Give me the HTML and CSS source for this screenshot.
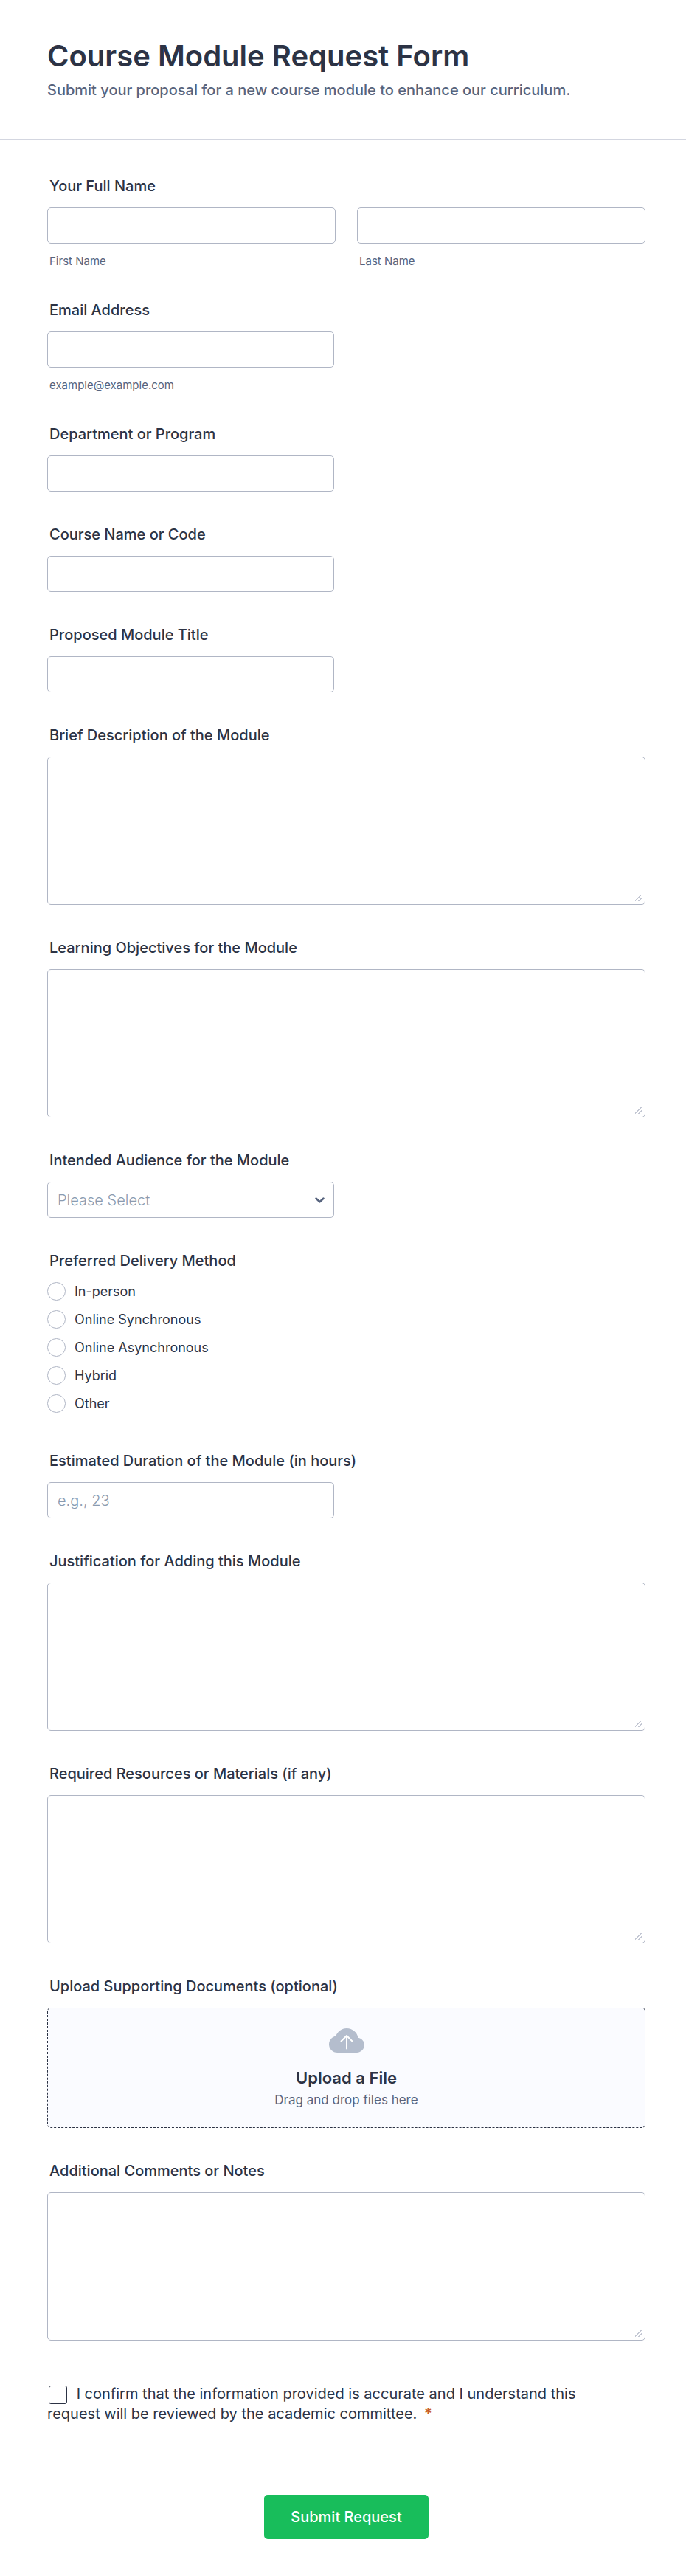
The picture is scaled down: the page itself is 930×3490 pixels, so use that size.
FILE: index.html
```html
<!DOCTYPE html>
<html lang="en">
<head>
    <meta charset="UTF-8">
    <meta name="viewport" content="width=device-width, initial-scale=1.0">
    <title>Course Module Request Form</title>
    <link rel="stylesheet" href="styles.css">
</head>
<body>

<form class="form">
    <header class="form-header">
        <h1>Course Module Request Form</h1>
        <p>Submit your proposal for a new course module to enhance our curriculum.</p>
    </header>

    <div class="form-body">
        <fieldset class="field">
            <legend class="label">Your Full Name</legend>
            <div class="name-row">
                <div class="name-col">
                    <input class="input" type="text" id="first">
                    <label class="sublabel" for="first">First Name</label>
                </div>
                <div class="name-col">
                    <input class="input" type="text" id="last">
                    <label class="sublabel" for="last">Last Name</label>
                </div>
            </div>
        </fieldset>

        <div class="field">
            <label class="label" for="email">Email Address</label>
            <input class="input half" type="email" id="email" aria-describedby="email-hint">
            <span class="sublabel" id="email-hint">example@example.com</span>
        </div>

        <div class="field">
            <label class="label" for="department">Department or Program</label>
            <input class="input half" type="text" id="department">
        </div>

        <div class="field">
            <label class="label" for="course">Course Name or Code</label>
            <input class="input half" type="text" id="course">
        </div>

        <div class="field">
            <label class="label" for="module-title">Proposed Module Title</label>
            <input class="input half" type="text" id="module-title">
        </div>

        <div class="field">
            <label class="label" for="description">Brief Description of the Module</label>
            <textarea class="input textarea" id="description"></textarea>
        </div>

        <div class="field">
            <label class="label" for="objectives">Learning Objectives for the Module</label>
            <textarea class="input textarea" id="objectives"></textarea>
        </div>

        <div class="field">
            <label class="label" for="audience">Intended Audience for the Module</label>
            <div class="select-wrap half">
                <select class="input select" id="audience">
                    <option>Please Select</option>
                </select>
                <svg class="chevron" viewBox="0 0 12 8" aria-hidden="true"><path d="M1.500 1.500 6 5.700l4.500-4.200"/></svg>
            </div>
        </div>

        <fieldset class="field radio-field">
            <legend class="label">Preferred Delivery Method</legend>
            <div class="radio-list">
                <label class="radio"><input type="radio" name="delivery">In-person</label>
                <label class="radio"><input type="radio" name="delivery">Online Synchronous</label>
                <label class="radio"><input type="radio" name="delivery">Online Asynchronous</label>
                <label class="radio"><input type="radio" name="delivery">Hybrid</label>
                <label class="radio"><input type="radio" name="delivery">Other</label>
            </div>
        </fieldset>

        <div class="field">
            <label class="label" for="duration">Estimated Duration of the Module (in hours)</label>
            <input class="input half" type="text" id="duration" placeholder="e.g., 23">
        </div>

        <div class="field">
            <label class="label" for="justification">Justification for Adding this Module</label>
            <textarea class="input textarea" id="justification"></textarea>
        </div>

        <div class="field">
            <label class="label" for="resources">Required Resources or Materials (if any)</label>
            <textarea class="input textarea" id="resources"></textarea>
        </div>

        <div class="field">
            <span class="label" id="upload-label">Upload Supporting Documents (optional)</span>
            <button class="upload" type="button" aria-describedby="upload-label">
                <svg class="cloud" viewBox="0 0 48 33" aria-hidden="true">
                    <path class="cloud-shape" d="M24 0c7.800 0 14.200 5.600 15.600 12.800C44.400 13.700 48 17.700 48 22.600 48 28.300 43.400 33 37.800 33H11.500C5.100 33 0 27.900 0 21.700c0-5.500 4-10.100 9.300-11.200C11.500 4.300 17.300 0 24 0z"/>
                    <path class="cloud-arrow" d="M24 27.500V10M16.500 17.500 24 10l7.500 7.500"/>
                </svg>
                <span class="upload-title">Upload a File</span>
                <span class="upload-hint">Drag and drop files here</span>
            </button>
        </div>

        <div class="field">
            <label class="label" for="comments">Additional Comments or Notes</label>
            <textarea class="input textarea" id="comments"></textarea>
        </div>

        <div class="confirm">
            <input type="checkbox" id="confirm" required>
            <label for="confirm">I confirm that the information provided is accurate and I understand this request will be reviewed by the academic committee. <span class="required">*</span></label>
        </div>
    </div>

    <footer class="form-footer">
        <button class="submit" type="submit">Submit Request</button>
    </footer>
</form>

</body>
</html>
```
FILE: styles.css
```css
* {
    box-sizing: border-box;
}

body {
    margin: 0;
    background-color: #fff;
    color: #2c3345;
    font-family: Inter, "Liberation Sans", sans-serif;
    font-size: 20px;
}

.form-header {
    padding: 52px 64px;
    border-bottom: 1px solid #d3d6e0;
}

.form-header h1 {
    margin: 0 0 8px;
    font-size: 40px;
    font-weight: 600;
    line-height: 48px;
}

.form-header p {
    margin: 0;
    color: #57647e;
    font-weight: 500;
    line-height: 28px;
}

.form-body {
    padding: 51px 55px 58px 64px;
}

.field {
    display: flex;
    flex-direction: column;
    align-items: flex-start;
    min-width: 0;
    margin: 0 0 46px;
    padding: 0;
    border: 0;
}

.label {
    display: block;
    margin-bottom: 17px;
    padding: 0 3px;
    font-weight: 500;
    line-height: 24px;
}

.input {
    display: block;
    width: 100%;
    height: 49px;
    margin: 0;
    padding: 0 13px;
    border: 1px solid #b0b6c5;
    border-radius: 5px;
    background-color: #fff;
    color: #2c3345;
    font: inherit;
    font-weight: 300;
}

.input::placeholder {
    color: #8a9bb0;
    opacity: 1;
}

.half {
    width: 48%;
}

.sublabel {
    display: block;
    margin-top: 16px;
    padding: 0 3px;
    color: #57647e;
    font-size: 15px;
    line-height: 16px;
}

.name-row {
    display: flex;
    gap: 29px;
    width: 100%;
}

.name-col {
    flex: 1;
}

.textarea {
    height: 201px;
    padding: 12px 13px;
    resize: vertical;
}

/* two short diagonal strokes as the resize grip */
.textarea::-webkit-resizer {
    background: linear-gradient(135deg, transparent 44%, #c3c7d3 44% 54%, transparent 54% 68%, #c3c7d3 68% 78%, transparent 78%) 2px 2px / 9px 9px no-repeat;
}

.select-wrap {
    position: relative;
}

.select {
    appearance: none;
    color: #8a9bb0;
}

.chevron {
    position: absolute;
    top: 21px;
    right: 13px;
    width: 13px;
    height: 9px;
    fill: none;
    stroke: #57647e;
    stroke-width: 2.5;
    stroke-linecap: round;
    stroke-linejoin: round;
    pointer-events: none;
}

.radio-field {
    padding-bottom: 7px;
}

.radio-list {
    display: flex;
    flex-direction: column;
    gap: 13px;
}

.radio {
    display: flex;
    align-items: center;
    gap: 12px;
    font-size: 18px;
    line-height: 24px;
}

.radio input {
    appearance: none;
    width: 25px;
    height: 25px;
    margin: 0;
    border: 1px solid #b0b6c5;
    border-radius: 50%;
    background-color: #fff;
}

.radio input:checked {
    border: 7px solid #2e69ff;
}

.upload {
    display: flex;
    flex-direction: column;
    align-items: center;
    width: 100%;
    padding: 27px 16px;
    border: 1px dashed #2c3345;
    border-radius: 5px;
    background-color: #fafbff;
    font: inherit;
    cursor: pointer;
}

.cloud {
    width: 48px;
    height: 33px;
    margin-bottom: 20px;
}

.cloud-shape {
    fill: #b4bdcd;
}

.cloud-arrow {
    fill: none;
    stroke: #fff;
    stroke-width: 2;
    stroke-linecap: round;
    stroke-linejoin: round;
}

.upload-title {
    color: #2c3345;
    font-size: 22px;
    font-weight: 600;
    line-height: 28px;
}

.upload-hint {
    margin-top: 6px;
    color: #57647e;
    font-size: 17px;
    line-height: 20px;
}

.confirm {
    max-width: 740px;
    padding-top: 13px;
    line-height: 27px;
}

.confirm input {
    appearance: none;
    width: 25px;
    height: 25px;
    margin: -4px 7px -4px 2px;
    border: 1px solid #2c3345;
    border-radius: 3px;
    background-color: #fff;
    vertical-align: middle;
}

.confirm input:checked {
    background-color: #2e69ff;
}

.required {
    margin-left: 4px;
    color: #c75b20;
    font-weight: 600;
}

.form-footer {
    display: flex;
    justify-content: center;
    padding: 37px 55px 49px 64px;
    border-top: 1px solid #e6e7f0;
}

.submit {
    min-width: 223px;
    height: 60px;
    padding: 0 36px;
    border: 0;
    border-radius: 5px;
    background-color: #18bd5b;
    color: #fff;
    font: inherit;
    font-weight: 500;
    cursor: pointer;
}
```
